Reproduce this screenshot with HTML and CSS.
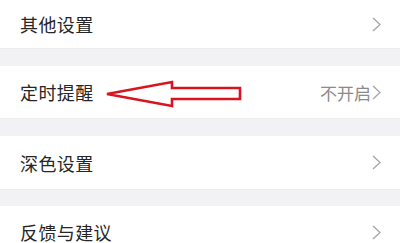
FILE: index.html
```html
<!DOCTYPE html>
<html lang="zh">
<head>
<meta charset="utf-8">
<link rel="stylesheet" href="styles.css">
</head>
<body>
<div class="list">
  <div class="row r1"><span class="label">其他设置</span><span class="right"><svg class="chev" width="9" height="15" viewBox="0 0 9 15"><polyline points="1,1 8,7.5 1,14" fill="none" stroke="#a6a6a6" stroke-width="1.3"/></svg></span></div>
  <div class="gap"></div>
  <div class="row r2"><span class="label">定时提醒</span><span class="right"><span class="value">不开启</span><svg class="chev" width="9" height="15" viewBox="0 0 9 15"><polyline points="1,1 8,7.5 1,14" fill="none" stroke="#a6a6a6" stroke-width="1.3"/></svg></span></div>
  <div class="gap"></div>
  <div class="row r3"><span class="label">深色设置</span><span class="right"><svg class="chev" width="9" height="15" viewBox="0 0 9 15"><polyline points="1,1 8,7.5 1,14" fill="none" stroke="#a6a6a6" stroke-width="1.3"/></svg></span></div>
  <div class="gap g3"></div>
  <div class="row r4"><span class="label">反馈与建议</span><span class="right"><svg class="chev" width="9" height="15" viewBox="0 0 9 15"><polyline points="1,1 8,7.5 1,14" fill="none" stroke="#a6a6a6" stroke-width="1.3"/></svg></span></div>
</div>
<svg class="arrow" width="400" height="243" viewBox="0 0 400 243">
  <path d="M107 94 L172 82 L172 88 L240 88 L240 99 L172 99 L172 106 Z" fill="none" stroke="#d7141f" stroke-width="2.6" stroke-linejoin="miter"/>
</svg>
</body>
</html>
```
FILE: styles.css
```css
html, body { margin: 0; padding: 0; }
body {
  width: 400px; height: 243px; overflow: hidden;
  background: #ffffff;
  font-family: "Noto Sans CJK SC", "Noto Sans", sans-serif;
  position: relative;
}
.list { display: flex; flex-direction: column; }
.row {
  display: flex; align-items: center; justify-content: space-between;
  padding: 0 19px 0 20px;
  background: #fff;
}
.r1 { height: 48px; }
.r2 { height: 52px; }
.r3 { height: 53px; }
.r4 { height: 52px; }
.gap { height: 18px; background: #f2f2f4; border-top: 1px solid #ececee; box-sizing: border-box; }
.g3 { height: 17px; }
.label { font-size: 18px; color: #262626; letter-spacing: 0.4px; line-height: 1; }
.right { display: flex; align-items: center; }
.value { font-size: 17px; color: #8a8a8a; line-height: 1; margin-right: 1px; }
.chev { display: block; }
.arrow { position: absolute; left: 0; top: 0; }
```
